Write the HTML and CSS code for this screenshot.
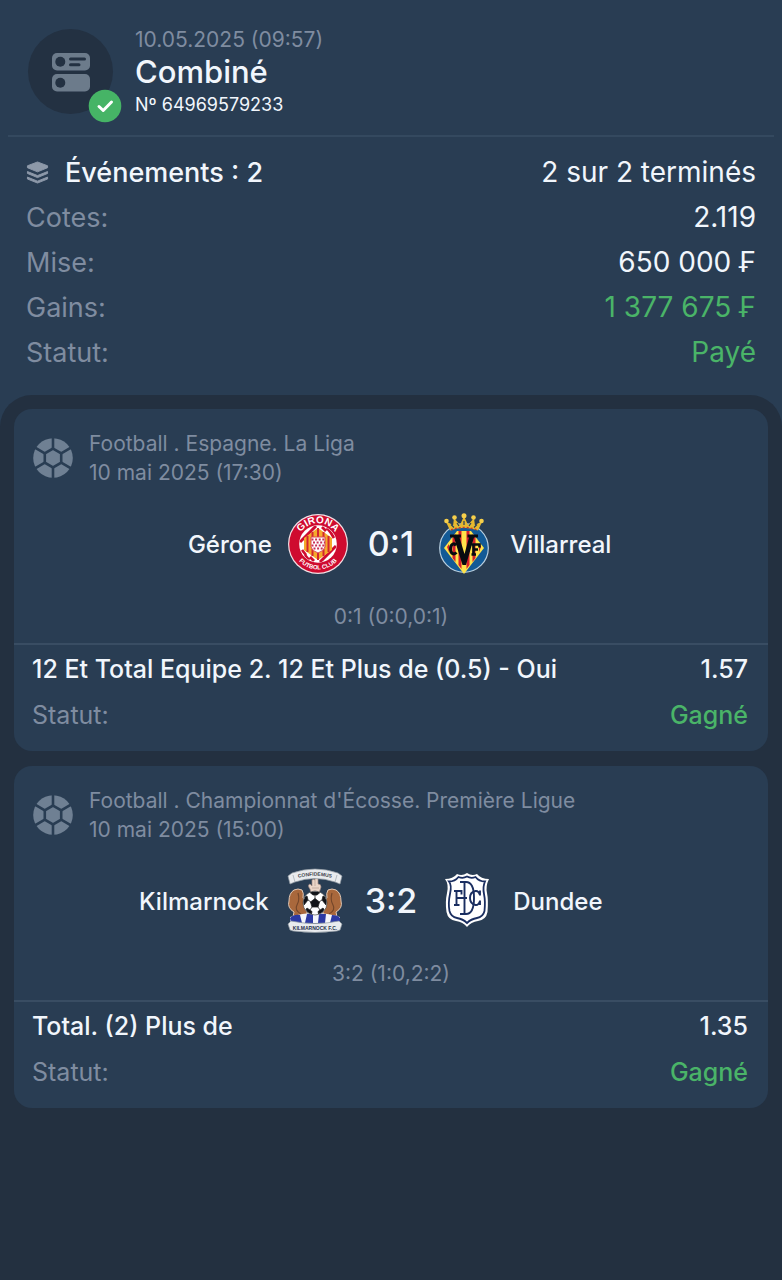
FILE: index.html
```html
<!DOCTYPE html>
<html lang="fr">
<head>
<meta charset="utf-8">
<meta name="viewport" content="width=device-width, initial-scale=1">
<title>Combiné</title>
<link rel="stylesheet" href="styles.css">
</head>
<body>
<svg class="defs" width="0" height="0" aria-hidden="true">
  <defs>
    <mask id="ball-gaps">
      <rect width="40" height="40" fill="#fff"/>
      <g stroke="#000" stroke-width="2.6" fill="none">
        <path d="M20 10.6 28.2 15.3V24.7L20 29.4 11.8 24.7V15.3Z"/>
        <path d="M20 10.6V-1M20 29.4V41M28.2 15.3 40 8.5M28.2 24.7 40 31.5M11.8 15.3 0 8.5M11.8 24.7 0 31.5"/>
      </g>
    </mask>
    <symbol id="ball" viewBox="0 0 40 40"><circle cx="20" cy="20" r="19.8" fill="currentColor" mask="url(#ball-gaps)"/></symbol>
  </defs>
</svg>

<header class="coupon">
  <div class="badge">
    <svg class="badge-icon" viewBox="0 0 40 40" aria-hidden="true">
      <rect x="1" y="1" width="38" height="17.5" rx="5" fill="#6c7b8b"/>
      <rect x="1" y="22" width="38" height="17.5" rx="5" fill="#6c7b8b"/>
      <g fill="#233142"><circle cx="9.3" cy="9.8" r="5"/><circle cx="9.3" cy="30.7" r="5"/></g>
      <path d="M19.500 7H33.500M19.500 12.700H28" stroke="#233142" stroke-width="3" stroke-linecap="round"/>
    </svg>
    <svg class="badge-check" viewBox="0 0 34 34" aria-label="Gagné" role="img">
      <circle cx="17" cy="17" r="16.300" fill="#46b466"/>
      <path d="M11 17.500 15.200 21.500 23.500 13" fill="none" stroke="#fff" stroke-width="3" stroke-linecap="round" stroke-linejoin="round"/>
    </svg>
  </div>
  <div class="coupon-text">
    <p class="coupon-date">10.05.2025 (09:57)</p>
    <h1 class="coupon-title">Combiné</h1>
    <p class="coupon-number">Nº 64969579233</p>
  </div>
</header>

<dl class="summary">
  <div class="row">
    <dt class="row-lead">
      <svg class="layers" viewBox="0 0 24 24" aria-hidden="true">
        <g fill="#8d99a9" stroke="#8d99a9" stroke-width="1" stroke-linejoin="round">
          <path d="M12 1 22.500 5V7L12 11.300 1.500 7V5Z"/>
          <path d="M1.500 11 12 15.200 22.500 11V13L12 17.300 1.500 13ZM1.500 16.800 12 21 22.500 16.800V18.800L12 23 1.500 18.800Z"/>
        </g>
      </svg>
      Événements : 2
    </dt>
    <dd>2 sur 2 terminés</dd>
  </div>
  <div class="row"><dt>Cotes:</dt><dd>2.119</dd></div>
  <div class="row"><dt>Mise:</dt><dd>650 000 ₣</dd></div>
  <div class="row"><dt>Gains:</dt><dd class="win">1 377 675 ₣</dd></div>
  <div class="row"><dt>Statut:</dt><dd class="win">Payé</dd></div>
</dl>

<main class="events">
  <article class="card">
    <div class="league">
      <svg class="ball" aria-hidden="true"><use href="#ball"/></svg>
      <p>Football . Espagne. La Liga<br>10 mai 2025 (17:30)</p>
    </div>
    <div class="match">
      <div class="team home">
        <span>Gérone</span>
        <svg class="crest" viewBox="0 0 60 60" aria-hidden="true">
          <defs>
            <clipPath id="gi-in"><circle cx="30" cy="30" r="18.500"/></clipPath>
            <path id="gi-top" d="M9.300 30a20.700 20.700 0 0 1 41.400 0"/>
            <path id="gi-bot" d="M4.500 30a25.500 25.500 0 0 0 51 0"/>
          </defs>
          <circle cx="30" cy="30" r="30" fill="#f3dfe4"/>
          <circle cx="30" cy="30" r="28.800" fill="#cf0b2f"/>
          <circle cx="30" cy="30" r="18.800" fill="#fff"/>
          <g clip-path="url(#gi-in)">
            <path d="M12 28 28 12M32 48 48 32" stroke="#cf0b2f" stroke-width="3"/>
            <path d="M34 13 38 17M39 14 43 19M43 19 46 24M14 36 18 41M17 41 21 46M22 43 26 47" stroke="#cf0b2f" stroke-width="2.800"/>
            <path d="M30 14 44 24V36L30 46 16 36V24Z" fill="#f5a92c"/>
            <path d="M30 14V46M24.500 18V42M35.500 18V42M19.500 22V38M40.500 22V38" stroke="#d3252f" stroke-width="2"/>
          </g>
          <path d="M23 23H37V33Q36 37 30 39Q24 37 23 33Z" fill="#fff" stroke="#dc4a50"/>
          <path d="M23.500 25.500H37M25 28.500H37M23.500 31.500H37M25.500 34.500H36" stroke="#c92f58" stroke-width="2" stroke-dasharray="2 1.600"/>
          <text class="crest-text" font-size="10" fill="#fff" text-anchor="middle"><textPath href="#gi-top" startOffset="50%">GIRONA</textPath></text>
          <text class="crest-text" font-size="6" fill="#fff" text-anchor="middle"><textPath href="#gi-bot" startOffset="50%">FUTBOL CLUB</textPath></text>
        </svg>
      </div>
      <strong class="score">0:1</strong>
      <div class="team">
        <svg class="crest" viewBox="0 0 60 60" aria-hidden="true">
          <circle cx="30" cy="34" r="24.300" fill="#135a96" stroke="#b9cfdf" stroke-width="1.200"/>
          <path d="M23 17H37L50 34 30 60 10 34Z" fill="#ffe34a"/>
          <path d="M24.500 17H27.500V55L24.500 51ZM32.500 17H35.500V51L32.500 55ZM18.500 24 21.500 20V48L18.500 44ZM38.500 20 41.500 24V44L38.500 48ZM13 33 15 30V38ZM45 30 47 33 45 38Z" fill="#d61f2d"/>
          <path d="M16 20.500H27V23.500H25.500L30.500 40 35 23.500H33.500V20.500H44V23.500H40L32 51H28.500L20 23.500H16Z" fill="#080b10"/>
          <path d="M22 31.500C20 28.500 16.500 30 16.500 35S20 41 22.500 38.500" fill="none" stroke="#080b10" stroke-width="3"/>
          <path d="M39.500 29.500V41M37.500 30.500H45.500V33.500M40 35.500H44M37.500 40.500H42" fill="none" stroke="#080b10" stroke-width="2.600"/>
          <path d="M16 16.500 12 8Q17 9 19 12L20 4 26 11 30 2 34 11 40 4 41 12Q43 9 48 8L44 16.500Q30 11 16 16.500Z" fill="#e7b92e"/>
          <path d="M20 13.500 17 10.500M25 12 23 9M30 11V7M35 12 37 9M40 13.500 43 10.500" stroke="#25415c" stroke-width="1.200"/>
          <g fill="#f6cf4b"><circle cx="12.500" cy="7" r="2.300"/><circle cx="20.500" cy="3.500" r="2.300"/><circle cx="30" cy="1.800" r="2.500"/><circle cx="39.500" cy="3.500" r="2.300"/><circle cx="47.500" cy="7" r="2.300"/></g>
          <path d="M17 16Q30 11 43 16" fill="none" stroke="#c43b2d" stroke-width="1.500" stroke-dasharray="2 2"/>
        </svg>
        <span>Villarreal</span>
      </div>
    </div>
    <p class="periods">0:1 (0:0,0:1)</p>
    <dl class="bet">
      <div class="row"><dt class="pick">12 Et Total Equipe 2. 12 Et Plus de (0.5) - Oui</dt><dd>1.57</dd></div>
      <div class="row"><dt>Statut:</dt><dd class="win">Gagné</dd></div>
    </dl>
  </article>

  <article class="card">
    <div class="league">
      <svg class="ball" aria-hidden="true"><use href="#ball"/></svg>
      <p>Football . Championnat d'Écosse. Première Ligue<br>10 mai 2025 (15:00)</p>
    </div>
    <div class="match">
      <div class="team home">
        <span>Kilmarnock</span>
        <svg class="crest" viewBox="0 0 60 60" aria-hidden="true">
          <defs>
            <path id="ki-top" d="M8 8.500Q30 1 52 8.500"/>
            <clipPath id="ki-ball"><circle cx="30" cy="32" r="11.500"/></clipPath>
          </defs>
          <path d="M26 22 25 18Q22 14 25 13L27 15V9Q28.500 7.500 30 9V6Q31.500 5 33 7V13Q36 13 36 16L34 22Z" fill="#ecd6c8" stroke="#a58d84" stroke-width=".7"/>
          <path d="M30 9V15M27 17H34" stroke="#b1978c" stroke-width=".6"/>
          <path d="M22 47 8 46 9 41Q2 37 4 30Q4 22 9 19Q13 17 17 19Q19 22 18 27L22 30Z" fill="#a9683c" stroke="#e3c9b5"/>
          <path d="M38 47 52 46 51 41Q58 37 56 30Q56 22 51 19Q47 17 43 19Q41 22 42 27L38 30Z" fill="#a9683c" stroke="#e3c9b5"/>
          <path d="M13 22Q15 29 12 34T16 43M47 22Q45 29 48 34T44 43" fill="none" stroke="#74462a" stroke-width="1.200"/>
          <path d="M5 46Q30 38 55 46V52H5Z" fill="#f4f5fa"/>
          <path d="M5 47Q9 43 15 44L17 52H6ZM22 43H28L28 52H20ZM34 43H41L40 52H33ZM47 44Q53 44 55 47V52H45Z" fill="#2c39a3"/>
          <circle cx="30" cy="32" r="12" fill="#fff" stroke="#333" stroke-width=".6"/>
          <g clip-path="url(#ki-ball)" stroke="#222" stroke-width=".8">
            <path d="M30 27.500 34.500 31 33 36H27L25.500 31ZM30 18 35 21.500 32 24 28 24 25 21.500ZM17 27 22 25 23 29 19 34ZM43 27 38 25 37 29 41 34ZM20 40 22 37 27 40.500 26 45ZM40 40 38 37 33 40.500 34 45Z" fill="#111318"/>
            <path d="M30 24V28M23 29 26 31M37 29 34 31M27 36 25 39M33 36 35 39"/>
          </g>
          <path d="M3 5 7 2Q30-6 53 2L57 5 55 13 50 11Q30 4 10 11L5 13Z" fill="#e9ebee" stroke="#8d969f" stroke-width=".7"/>
          <path d="M8 4 10 11M52 4 50 11" stroke="#9ea6ad" stroke-width=".7"/>
          <text class="crest-text" font-size="5" fill="#3d434a" text-anchor="middle"><textPath href="#ki-top" startOffset="50%">CONFIDEMUS</textPath></text>
          <path d="M3 53 6 50Q30 55 54 50L57 53 55 59 52 60Q30 63 8 60L5 59Z" fill="#e9ebee" stroke="#8d969f" stroke-width=".7"/>
          <text class="crest-text" x="30" y="58.500" font-size="5" fill="#26304a" text-anchor="middle">KILMARNOCK F.C.</text>
        </svg>
      </div>
      <strong class="score">3:2</strong>
      <div class="team">
        <svg class="crest" viewBox="0 0 60 60" aria-hidden="true">
          <path d="M8 8Q16 8 20 3Q25 5.500 30 2Q35 5.500 40 3Q44 8 52 8Q48.500 15 50 22T50.500 41Q49 49 41 50Q34 51 30 56Q26 51 19 50Q11 49 9.500 41Q8 31 10 22T8 8Z" fill="#fff"/>
          <path d="M12 10.500Q18 10.500 21.500 6Q26 7.800 30 5.500Q34 7.800 38.500 6Q42 10.500 48 10.500Q45.500 16 47 23T47.500 40Q46 46 40 47Q34 48 30 52Q26 48 20 47Q14 46 12.500 40Q11 32 13 23T12 10.500Z" fill="#fff" stroke="#1a2e60" stroke-width="1.800"/>
          <g fill="none" stroke="#1a2e60" stroke-width="1.900">
            <path d="M23 11H29C35 11 37 18 37 27S35 43 29 43H23M27.500 11V43"/>
            <path d="M17 20H24.500V23.500M19.500 20V34M17 34H22.500M19.500 27H30"/>
            <path d="M43 24Q41.500 19.500 38.500 20Q33 21 33 27T38.500 34Q41.500 34.500 43 30M43 19.500V24.500M43 29.500V34"/>
          </g>
        </svg>
        <span>Dundee</span>
      </div>
    </div>
    <p class="periods">3:2 (1:0,2:2)</p>
    <dl class="bet">
      <div class="row"><dt class="pick">Total. (2) Plus de</dt><dd>1.35</dd></div>
      <div class="row"><dt>Statut:</dt><dd class="win">Gagné</dd></div>
    </dl>
  </article>
</main>
</body>
</html>
```

FILE: styles.css
```css
* { box-sizing: border-box; }

body {
  margin: 0;
  min-height: 100vh;
  display: flex;
  flex-direction: column;
  background: #293d53;
  color: #f1f6fc;
  font-family: Inter, "Liberation Sans", sans-serif;
}

p, h1, dl, dd { margin: 0; }

.defs { position: absolute; }

.coupon {
  display: flex;
  align-items: flex-start;
  gap: 22px;
  margin: 0 8px;
  padding: 26px 20px 15px;
  border-bottom: 2px solid #34495f;
}

.badge {
  position: relative;
  display: grid;
  place-items: center;
  flex: none;
  width: 85px;
  height: 85px;
  margin-top: 3px;
  border-radius: 50%;
  background: #233142;
}

.badge-icon { width: 40px; height: 40px; }

.badge-check {
  position: absolute;
  right: -9px;
  bottom: -9px;
  width: 34px;
  height: 34px;
}

.coupon-date { font-size: 21px; line-height: 28px; color: #7f8ca0; }
.coupon-title { font-size: 31px; line-height: 36px; font-weight: 500; }
.coupon-number { font-size: 18px; line-height: 30px; }

.summary { padding: 13px 26px 20px; }

.row {
  display: flex;
  justify-content: space-between;
  align-items: center;
  gap: 16px;
  color: #7f8ca0;
}

.row dd { color: #f1f6fc; text-align: right; }
.row dd.win { color: #4ab468; }

.summary .row { font-size: 27px; line-height: 45px; }
.summary dd { font-size: 28px; }

.row-lead {
  display: flex;
  align-items: center;
  gap: 16px;
  color: #f1f6fc;
  font-weight: 500;
}

.layers { width: 23px; height: 23px; }

.events {
  flex: 1;
  display: flex;
  flex-direction: column;
  gap: 15px;
  padding: 14px 14px 32px;
  border-radius: 32px 32px 0 0;
  background: #233040;
}

.card { border-radius: 18px; background: #293d53; }

.league {
  display: flex;
  align-items: center;
  gap: 16px;
  padding: 20px 19px 0;
  font-size: 21px;
  line-height: 29px;
  color: #7f8ca0;
}

.ball { flex: none; width: 40px; height: 40px; color: #6f8093; }

.match {
  display: grid;
  grid-template-columns: 1fr auto 1fr;
  align-items: center;
  gap: 20px;
  padding: 27px 19px 0;
}

.team {
  display: flex;
  align-items: center;
  gap: 16px;
  font-size: 24px;
  font-weight: 500;
}

.home { justify-content: flex-end; }

.crest { flex: none; width: 60px; height: 60px; overflow: visible; }
.crest-text { font-family: "Liberation Sans", sans-serif; font-weight: 700; }

.score { font-size: 34px; line-height: 44px; font-weight: 500; }

.periods {
  padding: 29px 19px 12px;
  font-size: 21px;
  line-height: 28px;
  text-align: center;
  color: #7f8ca0;
}

.bet {
  padding: 1px 20px 13px 18px;
  border-top: 2px solid #394d63;
  font-size: 25px;
  line-height: 46px;
}

.bet dd, .pick { font-weight: 500; }
.pick { color: #f1f6fc; }
```
